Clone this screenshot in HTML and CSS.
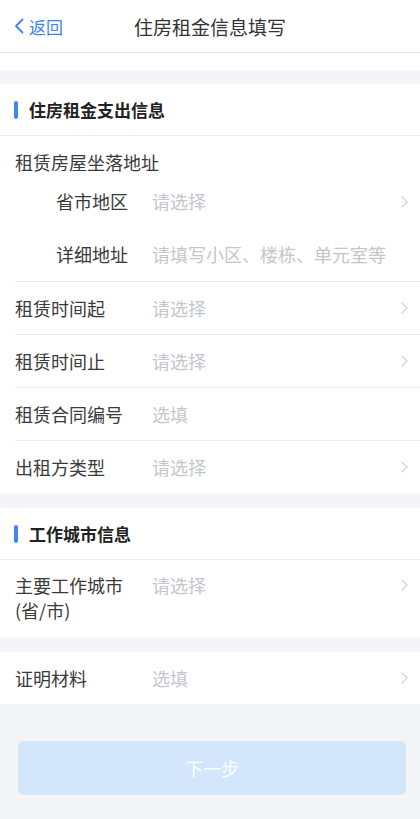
FILE: index.html
```html
<!DOCTYPE html>
<html lang="zh-CN">
<head>
    <meta charset="UTF-8">
    <meta name="viewport" content="width=device-width, initial-scale=1.0">
    <title>住房租金信息填写</title>
    <link rel="stylesheet" href="styles.css">
</head>
<body>
    <header class="nav">
        <a class="nav-back" href="#">
            <svg class="back-icon" viewBox="0 0 10 16" width="10" height="16">
                <path d="M8.5 1.5 L2 8 L8.5 14.5" fill="none" stroke="#3d85f0" stroke-width="1.8" stroke-linecap="round" stroke-linejoin="round"/>
            </svg>
            <span>返回</span>
        </a>
        <h1 class="nav-title">住房租金信息填写</h1>
    </header>
    <div class="top-blank"></div>

    <!-- 住房租金支出信息 -->
    <section class="card">
        <div class="card-title"><span class="bar"></span>住房租金支出信息</div>

        <div class="address-group">
            <div class="group-label">租赁房屋坐落地址</div>
            <div class="row sub">
                <span class="label">省市地区</span>
                <span class="value">请选择</span>
                <span class="arrow"></span>
            </div>
            <div class="row sub">
                <span class="label">详细地址</span>
                <span class="value">请填写小区、楼栋、单元室等</span>
            </div>
        </div>

        <div class="row line">
            <span class="label">租赁时间起</span>
            <span class="value">请选择</span>
            <span class="arrow"></span>
        </div>
        <div class="row line">
            <span class="label">租赁时间止</span>
            <span class="value">请选择</span>
            <span class="arrow"></span>
        </div>
        <div class="row line">
            <span class="label">租赁合同编号</span>
            <span class="value">选填</span>
        </div>
        <div class="row">
            <span class="label">出租方类型</span>
            <span class="value">请选择</span>
            <span class="arrow"></span>
        </div>
    </section>

    <!-- 工作城市信息 -->
    <section class="card">
        <div class="card-title"><span class="bar"></span>工作城市信息</div>
        <div class="row tall">
            <span class="label">主要工作城市<br>(省/市)</span>
            <span class="value">请选择</span>
            <span class="arrow"></span>
        </div>
    </section>

    <section class="card">
        <div class="row">
            <span class="label">证明材料</span>
            <span class="value">选填</span>
            <span class="arrow"></span>
        </div>
    </section>

    <div class="footer">
        <button class="next-button" disabled>下一步</button>
    </div>
</body>
</html>
```

FILE: styles.css
```css
html {
    box-sizing: border-box;
}
*, *:before, *:after {
    box-sizing: inherit;
}
body {
    margin: 0;
    padding: 0;
    min-height: 100vh;
    background-color: #f4f5f8;
    font-family: "Noto Sans CJK SC", "Noto Sans", sans-serif;
    color: #3a3a3a;
}

/* 顶部导航 */
.nav {
    height: 53px;
    background-color: #fff;
    border-bottom: 1px solid #e3e3e3;
    display: flex;
    align-items: center;
    justify-content: center;
    position: relative;
}
.nav-back {
    position: absolute;
    left: 14px;
    top: 0;
    height: 52px;
    display: flex;
    align-items: center;
    gap: 5px;
    color: #3d85f0;
    font-size: 17px;
    text-decoration: none;
}
.nav-title {
    margin: 0;
    font-size: 19px;
    font-weight: normal;
    color: #333;
}
.top-blank {
    height: 17px;
    background-color: #fff;
    margin-bottom: 14px;
}

/* 卡片 */
.card {
    background-color: #fff;
    margin-bottom: 15px;
}
.card-title {
    height: 52px;
    border-bottom: 1px solid #ebebeb;
    display: flex;
    align-items: center;
    padding-left: 14px;
    font-size: 17px;
    font-weight: bold;
    color: #222;
}
.bar {
    width: 4px;
    height: 18px;
    border-radius: 2px;
    background-color: #3e88f5;
    margin-right: 11px;
}

.address-group {
    margin-left: 15px;
    border-bottom: 1px solid #ebebeb;
}
.group-label {
    padding-top: 13px;
    font-size: 18px;
    line-height: 26px;
}

.row {
    height: 52px;
    display: flex;
    align-items: center;
    padding: 0 10px 0 15px;
    font-size: 18px;
}
.row.line {
    margin-left: 15px;
    padding-left: 0;
    height: 53px;
    border-bottom: 1px solid #ebebeb;
}
.row.sub {
    height: 53px;
    padding-left: 41px;
}
.row.sub .label {
    width: 96px;
}
.row.tall {
    height: 77px;
    align-items: flex-start;
    padding-top: 13px;
}
.row.tall .arrow {
    margin-top: 8px;
}
.row.card-last {
    height: 53px;
}

.label {
    width: 137px;
    flex-shrink: 0;
    line-height: 25px;
}
.value {
    flex: 1;
    color: #c4c6cc;
    line-height: 25px;
}
.arrow {
    width: 8px;
    height: 8px;
    border-top: 1.5px solid #c8c9cd;
    border-right: 1.5px solid #c8c9cd;
    transform: rotate(45deg);
    margin-right: 4px;
}

/* 底部按钮 */
.footer {
    padding: 22px 14px 20px 18px;
}
.next-button {
    width: 100%;
    height: 54px;
    border: none;
    border-radius: 5px;
    background-color: #d3e6fb;
    color: #fff;
    font-family: inherit;
    font-size: 18px;
}
```
